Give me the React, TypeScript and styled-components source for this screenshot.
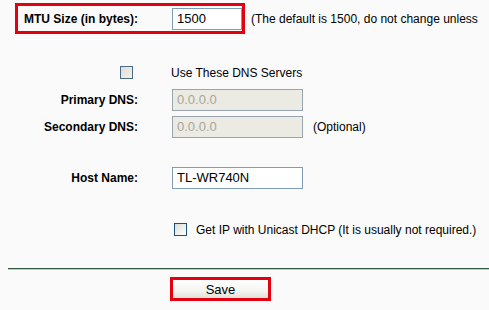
import styled, { createGlobalStyle } from 'styled-components';

const GlobalStyle = createGlobalStyle`
  html, body {
    margin: 0;
    padding: 0;
    background: #fafafa;
  }
  body {
    font-family: "Liberation Sans", Arial, sans-serif;
    font-size: 12px;
    color: #000000;
    overflow: hidden;
  }
`

const Page = styled.div`
  width: 489px;
  height: 310px;
  overflow: hidden;
  white-space: nowrap;
`

const Line = styled.div<{ $top?: number }>`
  display: flex;
  align-items: center;
  margin-top: ${props => props.$top ?? 0}px;
`

const Highlight = styled.div`
  display: grid;
  grid-template-columns: 120px auto;
  column-gap: 34px;
  align-items: center;
  box-sizing: border-box;
  height: 31px;
  margin-left: 15px;
  border: 3px solid #e3000f;
`

const Row = styled.div<{ $top?: number }>`
  display: grid;
  grid-template-columns: 138px auto;
  column-gap: 34px;
  align-items: center;
  height: 27px;
  margin-top: ${props => props.$top ?? 0}px;
`

const Label = styled.label`
  justify-self: end;
  font-weight: bold;
  font-size: 12px;
`

const Cell = styled.div`
  display: flex;
  align-items: center;
`

const Field = styled.input<{ $width: number }>`
  box-sizing: border-box;
  width: ${props => props.$width}px;
  height: 22px;
  padding: 0 4px;
  border: 1px solid #7f9db9;
  background: #ffffff;
  font-family: "Liberation Sans", Arial, sans-serif;
  font-size: 13px;
  color: #000000;
  outline: none;

  &:disabled {
    background: #ebeae3;
    border-color: #98a5b0;
    color: #a8a699;
  }
`

const Hint = styled.span<{ $left?: number }>`
  margin-left: ${props => props.$left ?? 10}px;
  font-size: 12px;
`

const Box = styled.span<{ $dim?: boolean }>`
  display: inline-block;
  box-sizing: border-box;
  width: 13px;
  height: 13px;
  border: 1px solid ${props => props.$dim ? '#4a6a86' : '#1c5180'};
  background: ${props => props.$dim
    ? 'linear-gradient(135deg, #dedcd6 0%, #f2f1ec 100%)'
    : 'linear-gradient(135deg, #dcdcd7 0%, #ffffff 100%)'};
`

const CheckCell = styled.div`
  justify-self: end;
  display: flex;
  margin-right: 5px;
`

const Divider = styled.div`
  margin: 25px 0 0 8px;
  height: 1px;
  background: #2f5a3e;
  border-bottom: 1px solid #a9dcbc;
`

const Actions = styled.div`
  display: flex;
  margin: 7px 0 0 170px;
`

const SaveFrame = styled.div`
  box-sizing: border-box;
  width: 101px;
  height: 24px;
  border: 3px solid #e3000f;
  display: flex;
`

const SaveButton = styled.button`
  flex: 1;
  margin: 0;
  padding: 0;
  border: none;
  background: linear-gradient(#ffffff 0%, #f4f4f0 60%, #e2e0d8 100%);
  font-family: "Liberation Sans", Arial, sans-serif;
  font-size: 13px;
  font-weight: normal;
  color: #000000;
`

export default function App() {
  return (
    <Page>
      <GlobalStyle />
      <Line $top={3}>
        <Highlight>
          <Label>MTU Size (in bytes):</Label>
          <Field $width={70} defaultValue="1500" />
        </Highlight>
        <Hint $left={6}>(The default is 1500, do not change unless</Hint>
      </Line>

      <Row $top={25}>
        <CheckCell><Box $dim /></CheckCell>
        <Cell><Hint $left={-1}>Use These DNS Servers</Hint></Cell>
      </Row>
      <Row>
        <Label>Primary DNS:</Label>
        <Cell><Field $width={131} defaultValue="0.0.0.0" disabled /></Cell>
      </Row>
      <Row>
        <Label>Secondary DNS:</Label>
        <Cell>
          <Field $width={131} defaultValue="0.0.0.0" disabled />
          <Hint>(Optional)</Hint>
        </Cell>
      </Row>

      <Row $top={24}>
        <Label>Host Name:</Label>
        <Cell><Field $width={131} defaultValue="TL-WR740N" /></Cell>
      </Row>

      <Row $top={25}>
        <span />
        <Cell>
          <Box style={{ marginLeft: 2 }} />
          <Hint $left={9}>Get IP with Unicast DHCP (It is usually not required.)</Hint>
        </Cell>
      </Row>

      <Divider />
      <Actions>
        <SaveFrame>
          <SaveButton type="button">Save</SaveButton>
        </SaveFrame>
      </Actions>
    </Page>
  );
}
